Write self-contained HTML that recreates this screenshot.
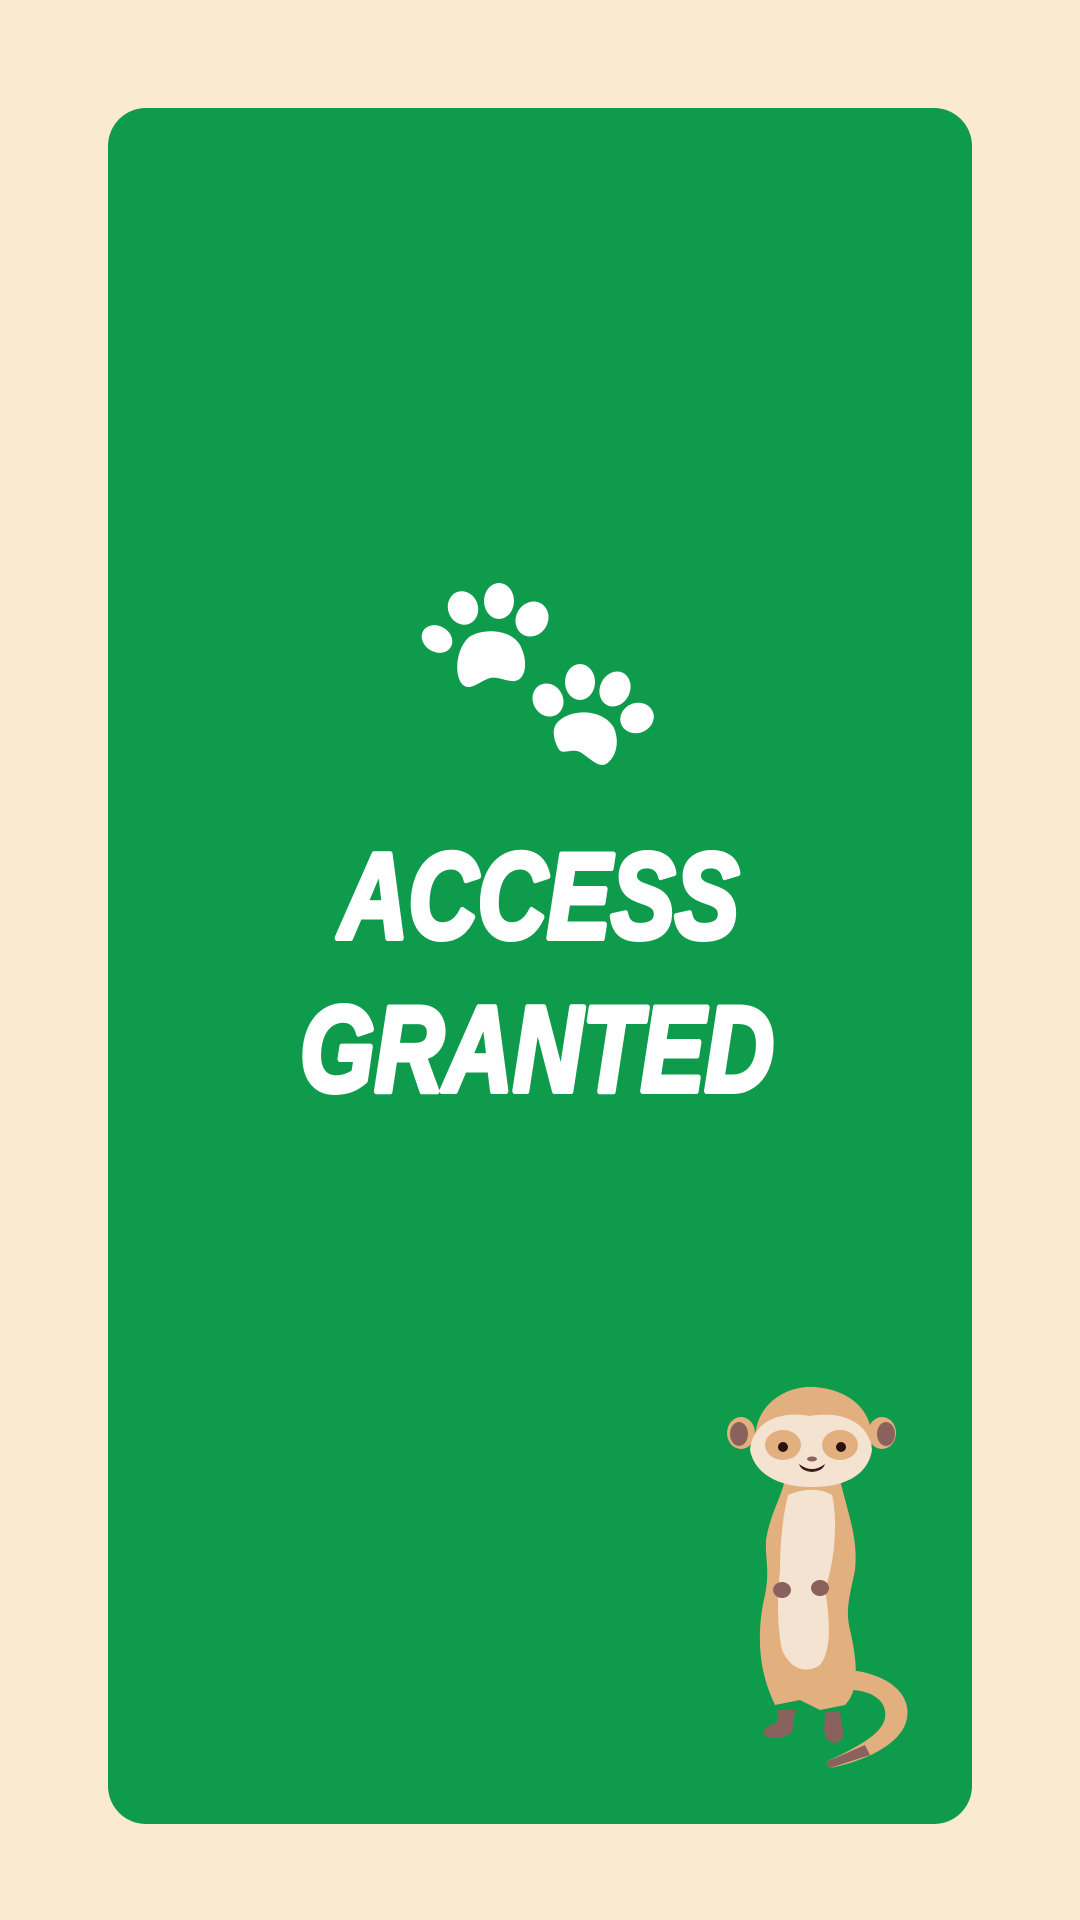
<!DOCTYPE html>
<html><head><meta charset="utf-8"><style>
html,body{margin:0;padding:0;background:#faebd0;width:1080px;height:1920px;overflow:hidden}
</style></head><body>
<svg width="1080" height="1920" viewBox="0 0 1080 1920" xmlns="http://www.w3.org/2000/svg">
<rect x="0" y="0" width="1080" height="1920" fill="#faebd0"/>
<rect x="108" y="108" width="864" height="1716" rx="38" fill="#0f9b4c"/>
<g fill="#fff">
 <path d="M468 638 C480 628 510 628 520 645 C528 660 526 676 518 680 C510 684 500 676 490 678 C478 682 470 692 462 684 C454 674 456 650 468 638Z"/>
 <ellipse cx="437" cy="639" rx="13" ry="16" transform="rotate(-60 437 639)"/>
 <ellipse cx="463" cy="608" rx="15" ry="17" transform="rotate(-20 463 608)"/>
 <ellipse cx="499" cy="601" rx="15" ry="18"/>
 <ellipse cx="532" cy="619" rx="16" ry="18" transform="rotate(30 532 619)"/>
 <path d="M560 720 C575 708 604 710 614 728 C620 742 616 758 606 764 C598 768 590 758 580 752 C570 748 562 756 558 748 C552 736 552 726 560 720Z"/>
 <ellipse cx="548" cy="700" rx="15" ry="17" transform="rotate(-30 548 700)"/>
 <ellipse cx="580" cy="682" rx="15" ry="18"/>
 <ellipse cx="615" cy="689" rx="15" ry="18" transform="rotate(25 615 689)"/>
 <ellipse cx="637" cy="718" rx="17" ry="15" transform="rotate(-20 637 718)"/>
</g>
<g fill="#fff" stroke="#fff" stroke-width="6" stroke-linejoin="round" font-family="Liberation Sans, sans-serif" font-weight="900" font-style="italic" font-size="122">
 <text x="339" y="938" textLength="400" lengthAdjust="spacingAndGlyphs">ACCESS</text>
 <text x="300" y="1091" textLength="474" lengthAdjust="spacingAndGlyphs">GRANTED</text>
</g>
<g>
 <path d="M850 1670 C895 1675 915 1700 905 1725 C895 1748 860 1762 830 1768 L826 1762 C855 1748 882 1735 885 1718 C888 1700 870 1690 850 1690Z" fill="#e2b07e"/>
 <path d="M830 1768 L826 1762 L865 1745 L870 1755Z" fill="#8a625d"/>
 <path d="M785 1480 L840 1480 C850 1520 858 1540 855 1570 C850 1595 845 1610 850 1630 C857 1660 860 1690 845 1705 L820 1710 L800 1700 L775 1705 C768 1690 765 1680 762 1665 C758 1640 760 1615 765 1595 C770 1570 765 1560 766 1540 C770 1515 780 1500 785 1480Z" fill="#e2b07e"/>
 <path d="M788 1495 C805 1488 820 1488 832 1495 C838 1520 835 1560 825 1590 C830 1620 832 1650 820 1665 C805 1675 790 1668 782 1650 C776 1620 778 1590 780 1570 C780 1545 782 1520 788 1495Z" fill="#f5e3d2"/>
 <path d="M778 1710 L795 1710 L793 1730 C788 1738 775 1740 765 1736 C760 1730 770 1725 778 1722Z" fill="#8a625d"/>
 <path d="M825 1712 L840 1712 L843 1730 C845 1742 835 1746 828 1740 C822 1735 825 1725 825 1712Z" fill="#8a625d"/>
 <ellipse cx="782" cy="1590" rx="9" ry="8" fill="#8a625d"/>
 <ellipse cx="820" cy="1588" rx="9" ry="8" fill="#8a625d"/>
 <ellipse cx="741" cy="1433" rx="14" ry="16" fill="#e2b07e"/>
 <ellipse cx="739" cy="1434" rx="9" ry="12" fill="#8a625d"/>
 <ellipse cx="882" cy="1433" rx="14" ry="16" fill="#e2b07e"/>
 <ellipse cx="886" cy="1434" rx="9" ry="12" fill="#8a625d"/>
 <path d="M755 1440 C755 1405 785 1385 815 1387 C850 1390 872 1410 872 1440 C872 1470 845 1488 812 1488 C780 1488 755 1470 755 1440Z" fill="#e2b07e"/>
 <path d="M750 1450 C752 1425 775 1410 810 1416 C845 1410 870 1425 872 1450 C868 1475 845 1487 812 1487 C780 1487 755 1475 750 1450Z" fill="#f5e3d2"/>
 <ellipse cx="783" cy="1445" rx="18" ry="15" fill="#e2b07e"/>
 <ellipse cx="840" cy="1445" rx="18" ry="15" fill="#e2b07e"/>
 <circle cx="783" cy="1447" r="5" fill="#2a1210"/>
 <circle cx="841" cy="1447" r="5" fill="#2a1210"/>
 <ellipse cx="812" cy="1459" rx="5" ry="2.5" fill="#8a625d"/>
 <path d="M799 1464 Q812 1474 825 1464 Q823 1471 812 1472 Q801 1471 799 1464Z" fill="#3a1a18"/>
</g>
</svg>
</body></html>
